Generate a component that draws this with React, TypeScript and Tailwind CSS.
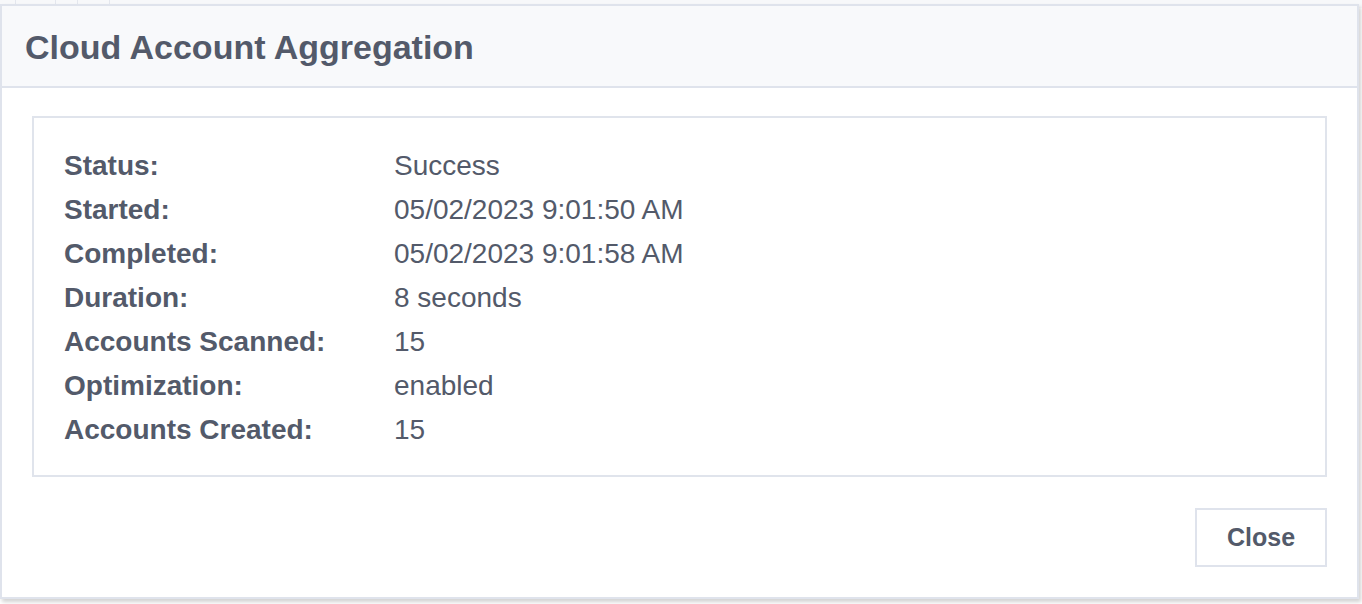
import React from 'react';

const rows: Array<{ label: string; value: string }> = [
  { label: 'Status:', value: 'Success' },
  { label: 'Started:', value: '05/02/2023 9:01:50 AM' },
  { label: 'Completed:', value: '05/02/2023 9:01:58 AM' },
  { label: 'Duration:', value: '8 seconds' },
  { label: 'Accounts Scanned:', value: '15' },
  { label: 'Optimization:', value: 'enabled' },
  { label: 'Accounts Created:', value: '15' },
];

export default function App() {
  return (
    <div
      className="relative w-[1362px] h-[604px] overflow-hidden bg-white text-[#535a6a]"
      style={{ fontFamily: '"Liberation Sans", Arial, Helvetica, sans-serif' }}
    >
      {/* page behind the dialog */}
      <div className="absolute left-0 top-0 flex h-[8px] w-full bg-[#f7f8fa]">
        <div className="w-[16px] border-r border-[#e4e7ee]" />
        <div className="w-[40px] border-r border-[#e4e7ee]" />
        <div className="w-[22px] border-r border-[#e4e7ee]" />
        <div className="w-[32px] border-r border-[#e4e7ee]" />
      </div>

      {/* dialog */}
      <div className="relative mt-[4px] flex h-[595px] w-[1359px] flex-col border-2 border-[#dfe3ec] bg-white shadow-[2px_3px_4px_rgba(0,0,0,0.18)]">
        <div className="flex h-[82px] items-center border-b-2 border-[#dfe3ec] bg-[#f8f9fb] pl-[23px]">
          <h1 className="pt-[2px] text-[34px] font-bold leading-none">Cloud Account Aggregation</h1>
        </div>

        <div className="px-[30px] pt-[28px]">
          <div className="border-2 border-[#e0e4ec] px-[30px] pt-[26px] pb-[23px]">
            {rows.map(r => (
              <div key={r.label} className="flex h-[44px] items-center text-[28px]">
                <div className="w-[330px] font-bold">{r.label}</div>
                <div>{r.value}</div>
              </div>
            ))}
          </div>
        </div>

        <div className="flex justify-end px-[30px] pt-[31px]">
          <button className="h-[59px] w-[132px] border-2 border-[#dfe3ec] bg-white text-[25px] font-bold text-[#535a6a]">
            Close
          </button>
        </div>
      </div>
    </div>
  );
}
